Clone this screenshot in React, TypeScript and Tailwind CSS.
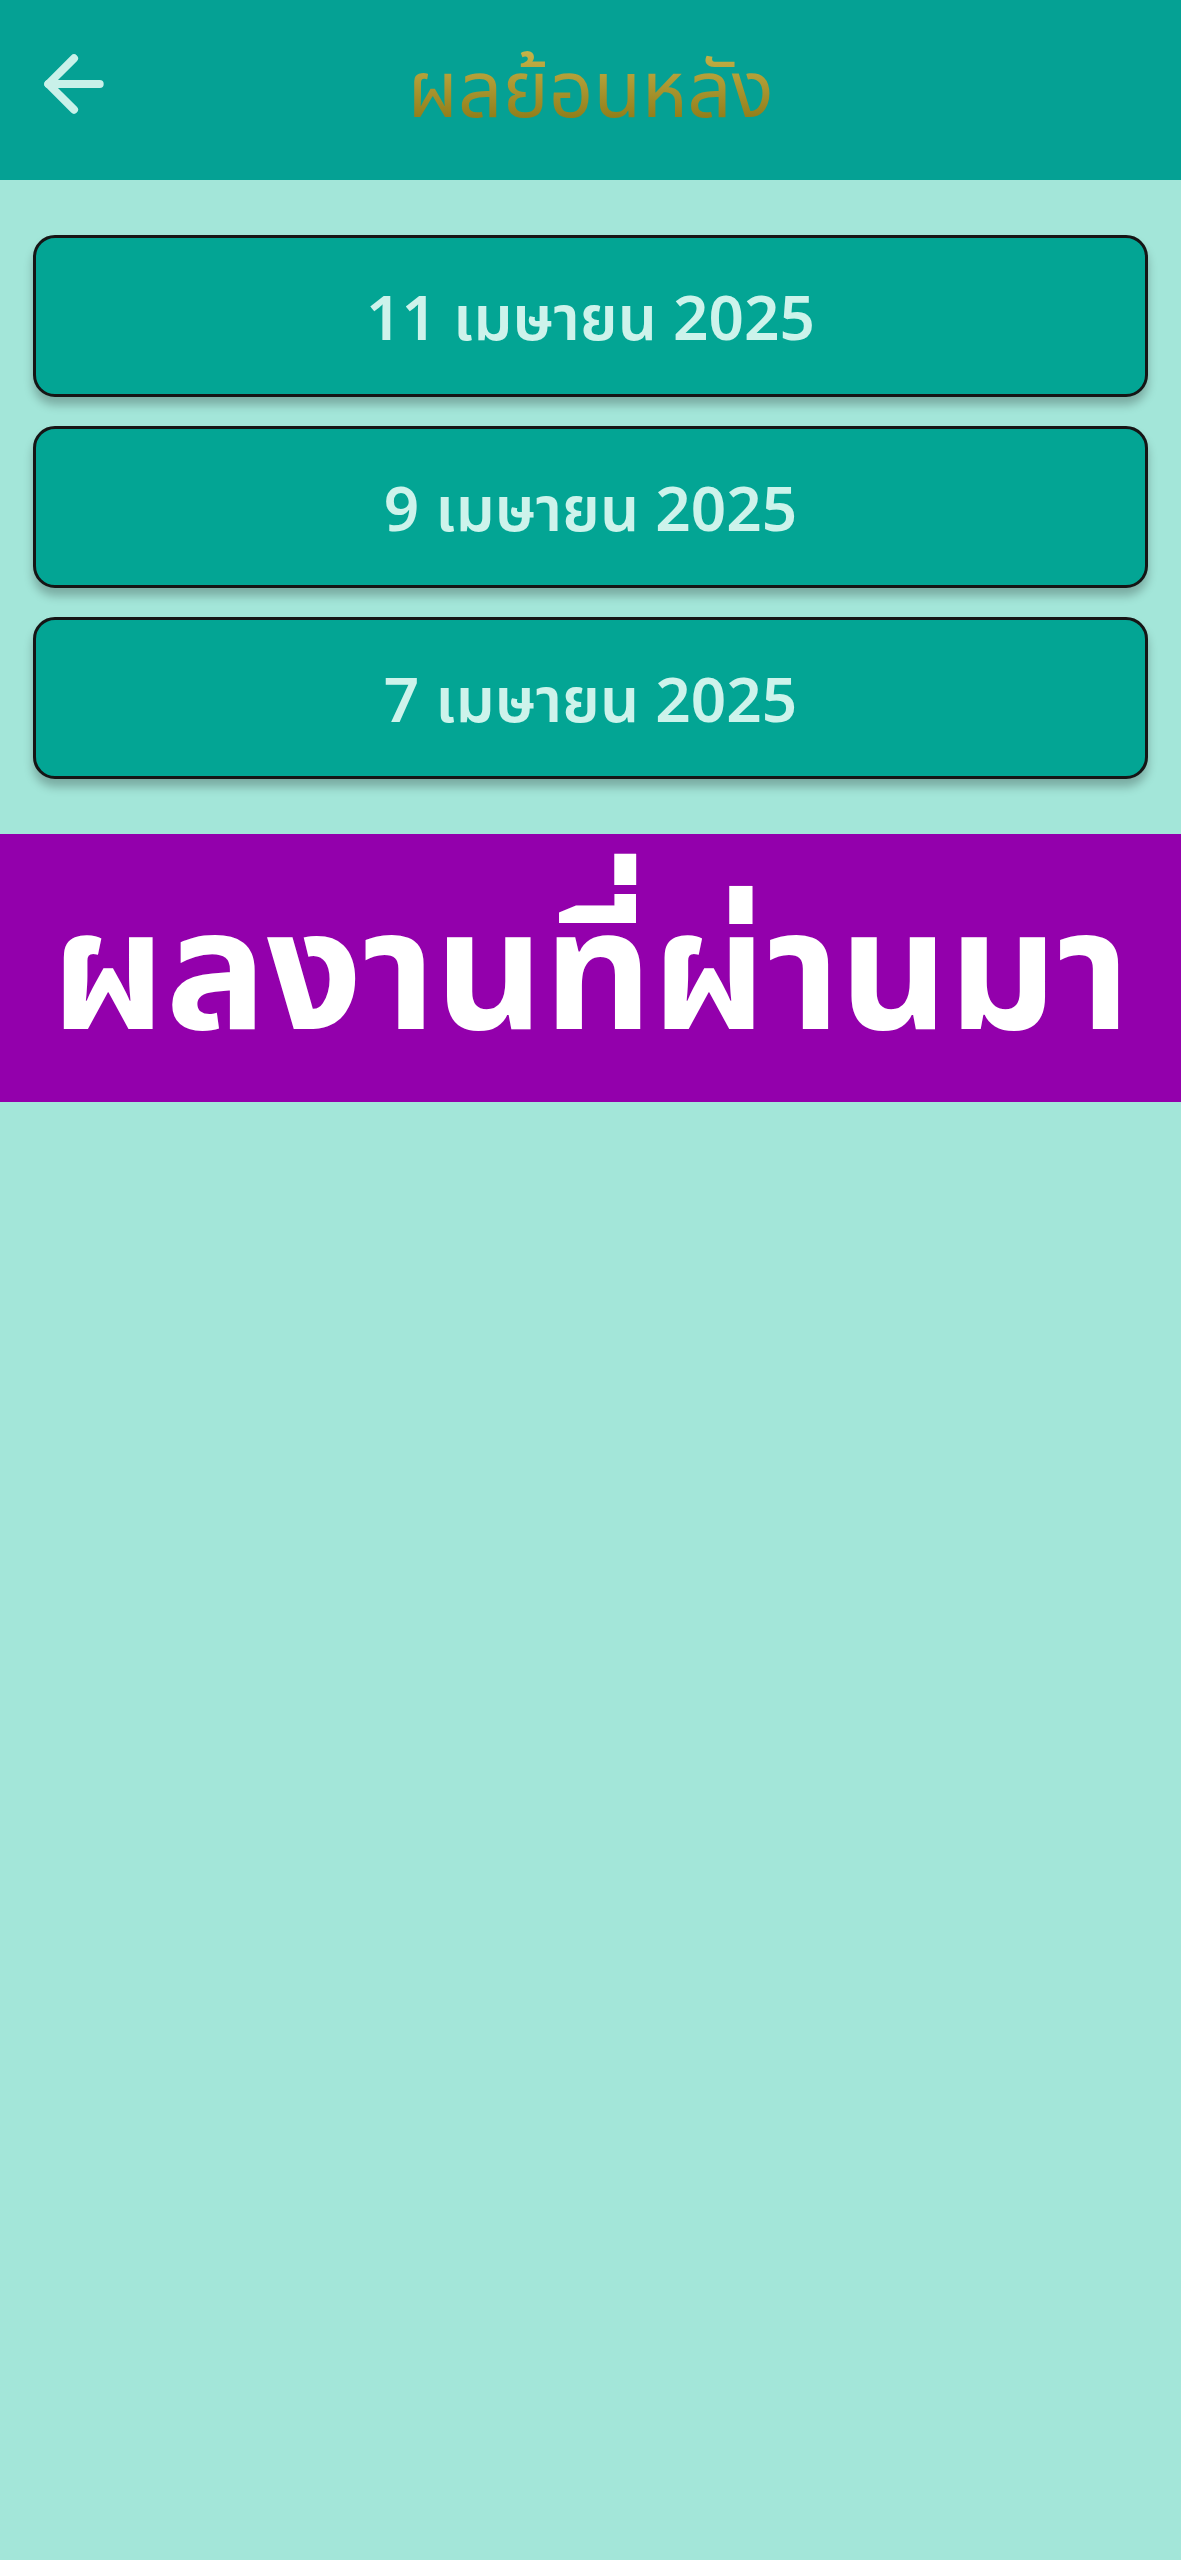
import { ArrowLeft } from "lucide-react";

const dates = ["11 เมษายน 2025", "9 เมษายน 2025", "7 เมษายน 2025"];

export default function App() {
  return (
    <main
      className="min-h-screen w-full bg-[#a3e6d9]"
      style={{ fontFamily: '"Noto Sans", "Noto Sans Thai", Roboto, sans-serif' }}
    >
      <header className="relative flex h-[180px] items-center justify-center bg-[#05a194]">
        <button className="absolute left-[30px] top-[40px] text-[#c9f1e9]">
          <ArrowLeft size={88} strokeWidth={2.2} />
        </button>
        <h1 className="-mt-[6px] bg-gradient-to-b from-[#c9b64a] to-[#8c7812] bg-clip-text text-[78px] leading-none text-transparent">
          ผลย้อนหลัง
        </h1>
      </header>

      <section className="flex flex-col gap-[29px] px-[33px] pt-[55px]">
        {dates.map((d) => (
          <div
            key={d}
            className="flex h-[162px] items-center justify-center rounded-[22px] border-[3px] border-[#151515] bg-[#03a594] shadow-[0_8px_10px_rgba(0,0,0,0.25)]"
          >
            <span className="text-[62px] font-semibold text-[#cdf3eb]">{d}</span>
          </div>
        ))}
      </section>

      <div className="mt-[55px] flex h-[268px] items-center justify-center bg-[#9300ac]">
        <span className="-mt-[8px] text-[168px] font-bold leading-none text-white">ผลงานที่ผ่านมา</span>
      </div>
    </main>
  );
}
